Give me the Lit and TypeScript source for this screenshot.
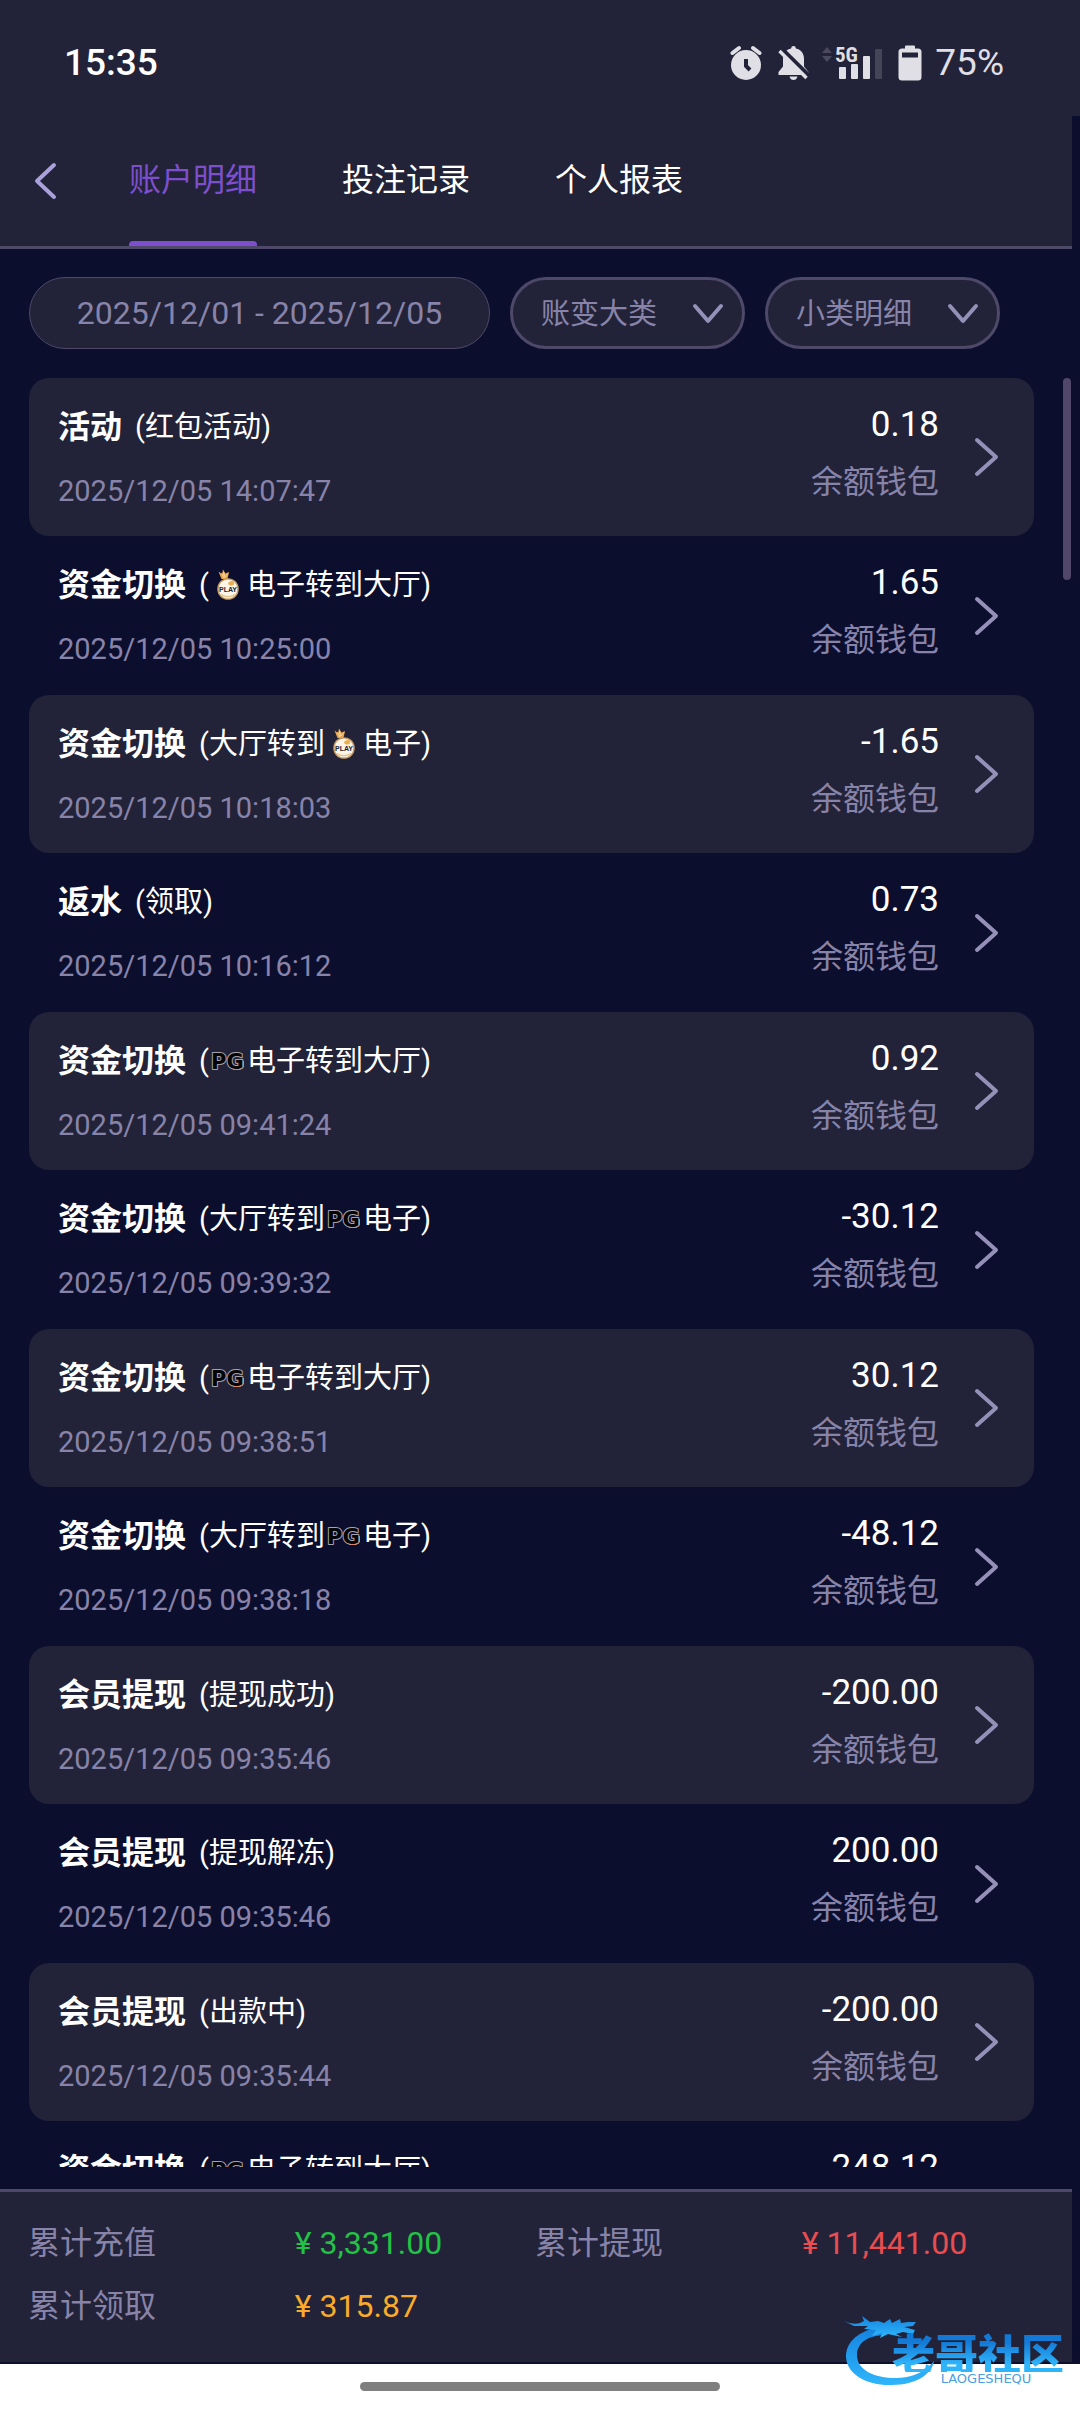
import { LitElement, html, css, svg, nothing } from "lit";
import { customElement, property, state } from "lit/decorators.js";
import { classMap } from "lit/directives/class-map.js";

type Provider = "play" | "pg";
type Part = string | { icon: Provider };

interface Entry {
  kind: string;
  detail: Part[];
  amount: string;
  time?: string;
  wallet?: string;
}

const WALLET = "余额钱包";

const playToHall: Part[] = ["(", { icon: "play" }, "电子转到大厅)"];
const hallToPlay: Part[] = ["(大厅转到", { icon: "play" }, "电子)"];
const pgToHall: Part[] = ["(", { icon: "pg" }, "电子转到大厅)"];
const hallToPg: Part[] = ["(大厅转到", { icon: "pg" }, "电子)"];

const ENTRIES: Entry[] = [
  { kind: "活动", detail: ["(红包活动)"], time: "2025/12/05 14:07:47", amount: "0.18", wallet: WALLET },
  { kind: "资金切换", detail: playToHall, time: "2025/12/05 10:25:00", amount: "1.65", wallet: WALLET },
  { kind: "资金切换", detail: hallToPlay, time: "2025/12/05 10:18:03", amount: "-1.65", wallet: WALLET },
  { kind: "返水", detail: ["(领取)"], time: "2025/12/05 10:16:12", amount: "0.73", wallet: WALLET },
  { kind: "资金切换", detail: pgToHall, time: "2025/12/05 09:41:24", amount: "0.92", wallet: WALLET },
  { kind: "资金切换", detail: hallToPg, time: "2025/12/05 09:39:32", amount: "-30.12", wallet: WALLET },
  { kind: "资金切换", detail: pgToHall, time: "2025/12/05 09:38:51", amount: "30.12", wallet: WALLET },
  { kind: "资金切换", detail: hallToPg, time: "2025/12/05 09:38:18", amount: "-48.12", wallet: WALLET },
  { kind: "会员提现", detail: ["(提现成功)"], time: "2025/12/05 09:35:46", amount: "-200.00", wallet: WALLET },
  { kind: "会员提现", detail: ["(提现解冻)"], time: "2025/12/05 09:35:46", amount: "200.00", wallet: WALLET },
  { kind: "会员提现", detail: ["(出款中)"], time: "2025/12/05 09:35:44", amount: "-200.00", wallet: WALLET },
  { kind: "资金切换", detail: pgToHall, amount: "248.12" },
];

@customElement("provider-icon")
export class ProviderIcon extends LitElement {
  static styles = css`
    :host {
      display: inline-flex;
    }
    svg {
      display: block;
      overflow: visible;
    }
    .play-word {
      font: 700 7px "Liberation Sans", sans-serif;
    }
    .pg-word {
      font: 700 21px "DejaVu Sans", sans-serif;
      paint-order: stroke;
      stroke-linejoin: round;
    }
  `;

  @property() name: Provider = "play";

  render() {
    return this.name === "play"
      ? html`<svg width="38" height="32" viewBox="0 0 38 32" role="img" aria-label="PLAY">
          <path d="M9.500 2.500 L13 5 L14 0.500 L16.500 4.500 L20 3 L18.500 10 L12.500 10 Z" fill="#e8a54a" />
          <path d="M12 4 L15 9 L14.500 3 L16 8 L19 4.500" fill="none" stroke="#f6d9a5" stroke-width="0.8" />
          <circle cx="19" cy="20" r="10.8" fill="#c39862" />
          <circle cx="19" cy="20" r="9.4" fill="#fdf6e8" />
          <path d="M19 14 Q22 10.500 25 13 Q26 16.300 22.500 16.600 Q19.500 16.600 19 14Z" fill="#eaae4c" />
          <path d="M12 25.500 Q19 30 26 25.500" fill="none" stroke="#e6c48d" stroke-width="1.4" />
          <text class="play-word" x="19" y="22.8" text-anchor="middle" fill="#20232f">PLAY</text>
        </svg>`
      : html`<svg width="38" height="32" viewBox="0 0 38 32" role="img" aria-label="PG">
          <text class="pg-word" x="2" y="24" fill="#050507" stroke="#a8a4ad" stroke-width="2">PG</text>
          <path d="M34.500 16 V22 L31 24.500 H24" fill="none" stroke="#d98a6c" stroke-width="1" />
        </svg>`;
  }
}

@customElement("status-bar")
export class StatusBar extends LitElement {
  static styles = css`
    :host {
      display: flex;
      align-items: center;
      justify-content: space-between;
      height: 116px;
      padding: 9px 76px 0 64px;
      box-sizing: border-box;
      background: #222338;
      color: #fff;
      font: 500 37px/44px Roboto, sans-serif;
    }
    .indicators {
      display: flex;
      align-items: center;
      color: #e0dfe6;
      font-weight: 400;
    }
    .alarm {
      margin-right: 16px;
    }
    .bell,
    .battery {
      margin-right: 13px;
    }
    .signal {
      margin-right: 16px;
      overflow: visible;
    }
    .network {
      font: 700 21px "Liberation Sans Narrow", "Roboto Condensed", Roboto, sans-serif;
    }
  `;

  render() {
    return html`
      <time>15:35</time>
      <div class="indicators">
        <svg class="alarm" width="32" height="36" viewBox="0 0 32 36" fill="none">
          <circle cx="16" cy="20" r="15" fill="currentColor" />
          <path d="M2.500 8 L9 3 M29.500 8 L23 3" stroke="currentColor" stroke-width="4" stroke-linecap="round" />
          <path d="M16 14 V21 L20 25" stroke="#222338" stroke-width="4" />
        </svg>
        <svg class="bell" width="31" height="36" viewBox="0 0 31 36">
          <path
            d="M15.500 1 Q17.800 1 17.900 3.400 C23 4.300 26 8.500 26 13.500 V21.500 L30.500 27 V30 H0.500 V27 L5 21.500 V13.500 C5 8.500 8 4.300 13.100 3.400 Q13.200 1 15.500 1Z"
            fill="currentColor"
          />
          <path d="M11.500 31.500 H19.500 Q18.500 35 15.500 35 Q12.500 35 11.500 31.500Z" fill="currentColor" />
          <path d="M2 2 L33 32.500" stroke="#222338" stroke-width="4" />
          <path d="M1.500 6 L28.500 33" stroke="currentColor" stroke-width="3.400" />
        </svg>
        <svg class="signal" width="60" height="36" viewBox="0 0 60 36">
          <path d="M0 8 L5 2 L10 8Z M0 11 L5 17 L10 11Z" fill="#4a4a5c" />
          <text class="network" x="13" y="17" fill="currentColor">5G</text>
          <rect x="17" y="22" width="7" height="12" rx="1" fill="currentColor" />
          <rect x="29" y="19" width="7" height="15" rx="1" fill="currentColor" />
          <rect x="41" y="11" width="7" height="23" rx="1" fill="currentColor" />
          <rect x="53" y="4" width="7" height="30" rx="1" fill="#454558" />
        </svg>
        <svg class="battery" width="24" height="36" viewBox="0 0 24 36">
          <path
            fill="currentColor"
            fill-rule="evenodd"
            d="M8 0.500 H16 Q17 0.500 17 1.500 V3.500 H20 Q23.500 3.500 23.500 7 V32 Q23.500 35.500 20 35.500 H4 Q0.500 35.500 0.500 32 V7 Q0.500 3.500 4 3.500 H7 V1.500 Q7 0.500 8 0.500Z M4 7.500 V12.500 H20 V7.500Z"
          />
        </svg>
        <span>75%</span>
      </div>
    `;
  }
}

@customElement("ledger-row")
export class LedgerRow extends LitElement {
  static styles = css`
    :host {
      display: block;
    }
    .row {
      display: flex;
      align-items: flex-start;
      width: 100%;
      height: 159px;
      padding: 0 35px 0 29px;
      border: 0;
      border-radius: 20px;
      background: none;
      color: #fff;
      font: inherit;
      text-align: left;
      cursor: pointer;
    }
    .shaded {
      height: 158px;
      background: #222338;
    }
    .what {
      display: flex;
      flex: 1;
      flex-direction: column;
      gap: 22px;
      padding-top: 27px;
    }
    .heading {
      display: flex;
      align-items: center;
      gap: 13px;
      font-size: 32px;
      line-height: 44px;
      white-space: nowrap;
    }
    .detail {
      display: flex;
      align-items: center;
      font-size: 29px;
    }
    .time {
      color: #8883a9;
      font-size: 29px;
      line-height: 40px;
    }
    .much {
      display: flex;
      flex-direction: column;
      gap: 17px;
      padding-top: 27px;
      font-size: 35px;
      line-height: 40px;
      text-align: right;
    }
    .wallet {
      color: #8883a9;
      font-size: 32px;
    }
    .chevron {
      align-self: center;
      margin-left: 35px;
    }
  `;

  @property({ attribute: false }) entry!: Entry;
  @property({ type: Boolean }) shaded = false;

  render() {
    const { kind, detail, time, amount, wallet } = this.entry;
    return html`
      <button type="button" class=${classMap({ row: true, shaded: this.shaded })}>
        <span class="what">
          <span class="heading">
            <strong>${kind}</strong>
            <span class="detail"
              >${detail.map((part) =>
                typeof part === "string"
                  ? html`<span>${part}</span>`
                  : html`<provider-icon name=${part.icon}></provider-icon>`
              )}</span
            >
          </span>
          ${time ? html`<time class="time">${time}</time>` : nothing}
        </span>
        <span class="much">
          <span>${amount}</span>
          ${wallet ? html`<span class="wallet">${wallet}</span>` : nothing}
        </span>
        <svg class="chevron" width="25" height="40" viewBox="0 0 25 40">
          <path
            d="M3 3 L22 20 L3 37"
            fill="none"
            stroke="#9590b8"
            stroke-width="4"
            stroke-linecap="round"
            stroke-linejoin="round"
          />
        </svg>
      </button>
    `;
  }
}

@customElement("site-mark")
export class SiteMark extends LitElement {
  static styles = css`
    :host {
      display: flex;
      align-items: flex-start;
    }
    .dragon {
      flex: none;
    }
    .words {
      display: flex;
      flex-direction: column;
      align-items: center;
      margin: 16px 0 0 -44px;
    }
    .name {
      background: linear-gradient(#1279d6 25%, #2fb4fa 80%);
      background-clip: text;
      -webkit-background-clip: text;
      color: transparent;
      font: 900 43px/40px "Noto Sans CJK SC", sans-serif;
    }
    .latin {
      margin-left: 16px;
      color: #4aa0e2;
      font: 400 13px/14px "DejaVu Sans", sans-serif;
    }
  `;

  render() {
    return html`
      <svg class="dragon" width="92" height="72" viewBox="0 0 92 72">
        <defs>
          <linearGradient id="scale" x1="0" y1="0" x2="0" y2="1">
            <stop offset="0" stop-color="#1583e0" />
            <stop offset="1" stop-color="#2fb6fb" />
          </linearGradient>
        </defs>
        ${svg`<g fill="url(#scale)">
          <path d="M31 12 C12 17 2 27 2 41 C3 59 24 70 48 69 C72 69 88 58 90 45 C80 57 67 62 52 62 C30 62 13 54 13 39 C13 28 22 20 40 19 Z" />
          <path d="M0 5 Q8 9 16 7 L20 5 L18 0 L26 6 L34 5 L40 7 L46 3 L48 7 L56 3 L57 7 L64 6 L72 6 L69 10 L60 11 L71 14 L69 18 L59 16 L52 18 L58 21 L44 18 L36 22 L38 17 L28 20 L32 14 L20 13 L24 10 L10 10 Z" />
        </g>`}
      </svg>
      <div class="words">
        <span class="name">老哥社区</span>
        <span class="latin">LAOGESHEQU</span>
      </div>
    `;
  }
}

@customElement("app-root")
export class AppRoot extends LitElement {
  static styles = css`
    :host {
      display: block;
      font-family: Roboto, "Noto Sans CJK SC", sans-serif;
      color: #fff;
    }
    .screen {
      position: relative;
      display: flex;
      flex-direction: column;
      height: 100vh;
      background: #0c0e2e;
    }
    .header {
      display: flex;
      margin-right: 8px;
      height: 133px;
      box-sizing: border-box;
      border-bottom: 3px solid #4e4869;
      background: #222338;
    }
    .back {
      display: flex;
      align-items: center;
      width: 129px;
      padding: 0 0 0 33px;
      border: 0;
      background: none;
      cursor: pointer;
    }
    .tabs {
      display: flex;
      gap: 85px;
    }
    .tab {
      display: flex;
      align-items: center;
      position: relative;
      padding-bottom: 2px;
      color: #fff;
      font-size: 32px;
      line-height: 44px;
      text-decoration: none;
    }
    .current {
      color: #7d4fce;
    }
    .current::after {
      content: "";
      position: absolute;
      left: 0;
      right: 0;
      bottom: 0;
      height: 5px;
      border-radius: 4px 4px 0 0;
      background: #7d4fce;
    }
    .filters {
      display: grid;
      grid-template-columns: 461fr 235fr 235fr;
      gap: 20px;
      padding: 28px 80px 29px 29px;
    }
    .range {
      height: 72px;
      padding: 0;
      border: 1px solid #4e4869;
      border-radius: 36px;
      background: #222338;
      color: #8883a9;
      font: inherit;
      font-size: 32px;
      white-space: nowrap;
    }
    .picker {
      display: grid;
      align-items: center;
    }
    .select,
    .arrow {
      grid-area: 1 / 1;
    }
    .select {
      appearance: none;
      width: 100%;
      height: 72px;
      padding: 2px 60px 0 28px;
      border: 3px solid #4e4869;
      border-radius: 36px;
      background: #222338;
      color: #8883a9;
      font: inherit;
      font-size: 29px;
    }
    .arrow {
      justify-self: end;
      margin-right: 21px;
      pointer-events: none;
    }
    .ledger {
      position: relative;
      flex: 1;
      min-height: 0;
      margin-bottom: 22px;
    }
    .entries {
      height: 100%;
      box-sizing: border-box;
      margin: 0;
      padding: 0 46px 0 29px;
      overflow-y: auto;
      scrollbar-width: none;
      list-style: none;
    }
    .thumb {
      position: absolute;
      top: 0;
      right: 9px;
      width: 8px;
      height: 202px;
      border-radius: 4px;
      background: #51476a;
    }
    .totals {
      display: grid;
      grid-template-columns: 1fr 1fr;
      row-gap: 19px;
      margin: 0 8px 2px 0;
      padding: 29px 30px 34px 28px;
      border-top: 3px solid #4e4869;
      background: #222338;
      font-size: 32px;
      line-height: 44px;
    }
    .total {
      display: grid;
      grid-template-columns: 10fr 9fr;
    }
    .label {
      color: #8883a9;
    }
    .in {
      color: #21c245;
    }
    .out {
      color: #ea4d4f;
    }
    .bonus {
      color: #fbaa2a;
    }
    .gesture {
      display: flex;
      align-items: center;
      justify-content: center;
      height: 48px;
      box-sizing: border-box;
      padding-bottom: 3px;
      background: #fff;
    }
    .pill {
      width: 33.333%;
      height: 9px;
      border-radius: 5px;
      background: #7f7f7f;
    }
    .mark {
      position: absolute;
      right: 16px;
      bottom: 24px;
    }
  `;

  @state() private tab = 0;

  private picker(label: string) {
    return html`
      <span class="picker">
        <select class="select" aria-label=${label}>
          <option>${label}</option>
        </select>
        <svg class="arrow" width="32" height="22" viewBox="0 0 32 22">
          <path
            d="M3 4 L16 19 L29 4"
            fill="none"
            stroke="#9590b8"
            stroke-width="4"
            stroke-linecap="round"
            stroke-linejoin="round"
          />
        </svg>
      </span>
    `;
  }

  private total(label: string, value: string, tone: string) {
    return html`
      <div class="total">
        <span class="label">${label}</span>
        <output class=${tone}>¥ ${value}</output>
      </div>
    `;
  }

  render() {
    return html`
      <div class="screen">
        <status-bar></status-bar>
        <header class="header">
          <button class="back" type="button" aria-label="返回">
            <svg width="26" height="40" viewBox="0 0 26 40">
              <path
                d="M21 4 L4 20 L21 36"
                fill="none"
                stroke="#aaa1dc"
                stroke-width="4"
                stroke-linecap="round"
                stroke-linejoin="round"
              />
            </svg>
          </button>
          <nav class="tabs">
            ${["账户明细", "投注记录", "个人报表"].map(
              (name, i) => html`<a
                href="#"
                class=${classMap({ tab: true, current: i === this.tab })}
                @click=${(e: Event) => {
                  e.preventDefault();
                  this.tab = i;
                }}
                >${name}</a
              >`
            )}
          </nav>
        </header>
        <div class="filters">
          <button class="range" type="button">2025/12/01 - 2025/12/05</button>
          ${this.picker("账变大类")} ${this.picker("小类明细")}
        </div>
        <div class="ledger">
          <ul class="entries">
            ${ENTRIES.map(
              (entry, i) => html`<li>
                <ledger-row .entry=${entry} ?shaded=${i % 2 === 0}></ledger-row>
              </li>`
            )}
          </ul>
          <div class="thumb"></div>
        </div>
        <footer class="totals">
          ${this.total("累计充值", "3,331.00", "in")} ${this.total("累计提现", "11,441.00", "out")}
          ${this.total("累计领取", "315.87", "bonus")}
        </footer>
        <div class="gesture"><div class="pill"></div></div>
        <site-mark class="mark"></site-mark>
      </div>
    `;
  }
}
